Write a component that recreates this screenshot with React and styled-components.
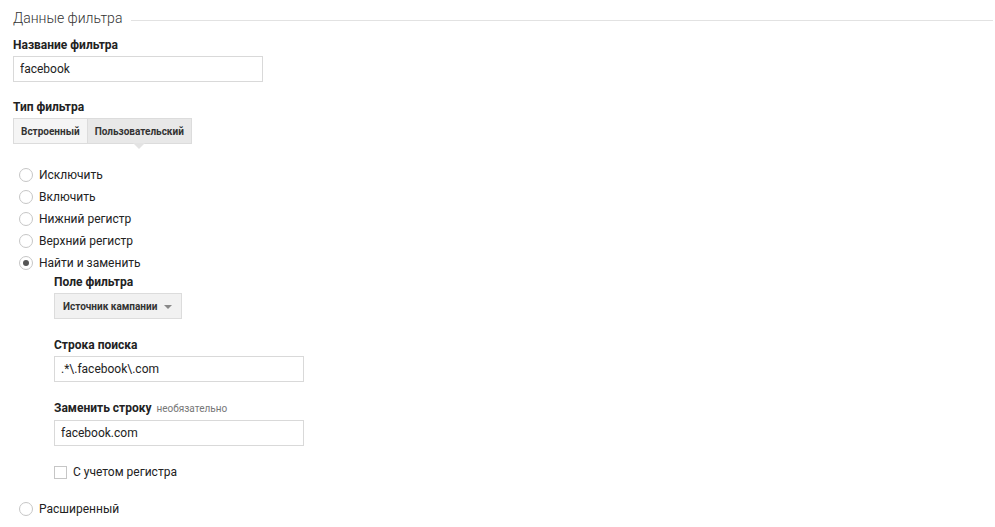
import React, { useState } from 'react';
import styled, { createGlobalStyle } from 'styled-components';

const GlobalStyle = createGlobalStyle`
  body {
    margin: 0;
    background: #fff;
    font-family: Roboto, "Liberation Sans", Arial, sans-serif;
    color: #222;
  }
`;

const Page = styled.div`
  padding: 6px 2px 0 13px;
  width: 980px;
`;

const Header = styled.div`
  display: flex;
  align-items: center;
  gap: 9px;
  height: 24px;
`;

const Title = styled.div`
  font-size: 14px;
  font-weight: 300;
  color: #333;
  white-space: nowrap;
`;

const Rule = styled.div`
  flex: 1;
  height: 1px;
  background: #e2e2e2;
  margin-top: 4px;
`;

const Label = styled.div`
  font-size: 12px;
  font-weight: 700;
  color: #222;
  margin: ${props => props.top || 0}px 0 3px;
  line-height: 16px;
`;

const Hint = styled.span`
  font-size: 10px;
  font-weight: 400;
  color: #777;
  margin-left: 2px;
`;

const TextInput = styled.input`
  box-sizing: border-box;
  display: block;
  width: 250px;
  height: 26px;
  padding: 0 6px;
  border: 1px solid #d9d9d9;
  font-family: inherit;
  font-size: 12px;
  color: #222;
  outline: none;
`;

const Segments = styled.div`
  display: flex;
  margin-top: 3px;
`;

const Segment = styled.button`
  position: relative;
  height: 26px;
  padding: 0 7px;
  border: 1px solid #dcdcdc;
  margin-left: -1px;
  &:first-child { margin-left: 0; }
  background: ${props => (props.active ? '#e8e8e8' : '#f5f5f5')};
  font-family: inherit;
  font-size: 10px;
  font-weight: 700;
  color: #333;
  cursor: pointer;

  &::after {
    content: '';
    display: ${props => (props.active ? 'block' : 'none')};
    position: absolute;
    left: 50%;
    bottom: -6px;
    margin-left: -6px;
    border-left: 6px solid transparent;
    border-right: 6px solid transparent;
    border-top: 6px solid #e3e3e3;
  }
`;

const Options = styled.div`
  margin-top: 20px;
  padding-left: 6px;
`;

const RadioRow = styled.label`
  display: flex;
  align-items: center;
  height: 22px;
  font-size: 12px;
  color: #222;
  cursor: pointer;
`;

const RadioDot = styled.span`
  box-sizing: border-box;
  width: 14px;
  height: 14px;
  border-radius: 50%;
  border: 1px solid #c6c6c6;
  background: #fff;
  margin-right: 6px;
  display: flex;
  align-items: center;
  justify-content: center;

  &::after {
    content: '';
    width: 6px;
    height: 6px;
    border-radius: 50%;
    background: #555;
    display: ${props => (props.checked ? 'block' : 'none')};
  }
`;

const Nested = styled.div`
  padding-left: 35px;
  padding-bottom: 19px;
`;

const Select = styled.div`
  box-sizing: border-box;
  display: inline-flex;
  align-items: center;
  justify-content: space-between;
  width: 128px;
  height: 26px;
  padding: 0 9px 0 8px;
  border: 1px solid #dcdcdc;
  background: #f1f1f1;
  font-size: 10px;
  font-weight: 700;
  color: #333;

  &::after {
    content: '';
    margin-top: 2px;
    border-left: 4px solid transparent;
    border-right: 4px solid transparent;
    border-top: 4px solid #888;
  }
`;

const CheckRow = styled.label`
  display: flex;
  align-items: center;
  margin-top: 19px;
  font-size: 12px;
  color: #222;
`;

const Box = styled.span`
  box-sizing: border-box;
  width: 13px;
  height: 13px;
  border: 1px solid #c6c6c6;
  background: #fff;
  margin-right: 6px;
`;

const filterTypes = ['Исключить', 'Включить', 'Нижний регистр', 'Верхний регистр', 'Найти и заменить'];

const App = () => {
  const [type, setType] = useState('custom');
  const [choice, setChoice] = useState('Найти и заменить');

  return (
    <Page>
      <GlobalStyle />
      <Header>
        <Title>Данные фильтра</Title>
        <Rule />
      </Header>

      <Label top={7}>Название фильтра</Label>
      <TextInput defaultValue="facebook" />

      <Label top={17}>Тип фильтра</Label>
      <Segments>
        <Segment active={type === 'builtin'} onClick={() => setType('builtin')}>Встроенный</Segment>
        <Segment active={type === 'custom'} onClick={() => setType('custom')}>Пользовательский</Segment>
      </Segments>

      <Options>
        {filterTypes.map(name => (
          <RadioRow key={name} onClick={() => setChoice(name)}>
            <RadioDot checked={choice === name} />
            {name}
          </RadioRow>
        ))}
        <Nested>
          <Label top={0}>Поле фильтра</Label>
          <Select>Источник кампании</Select>
          <Label top={18}>Строка поиска</Label>
          <TextInput defaultValue=".*\.facebook\.com" />
          <Label top={18}>Заменить строку <Hint>необязательно</Hint></Label>
          <TextInput defaultValue="facebook.com" />
          <CheckRow>
            <Box />
            С учетом регистра
          </CheckRow>
        </Nested>
        <RadioRow onClick={() => setChoice('Расширенный')}>
          <RadioDot checked={choice === 'Расширенный'} />
          Расширенный
        </RadioRow>
      </Options>
    </Page>
  );
};

export default App;
